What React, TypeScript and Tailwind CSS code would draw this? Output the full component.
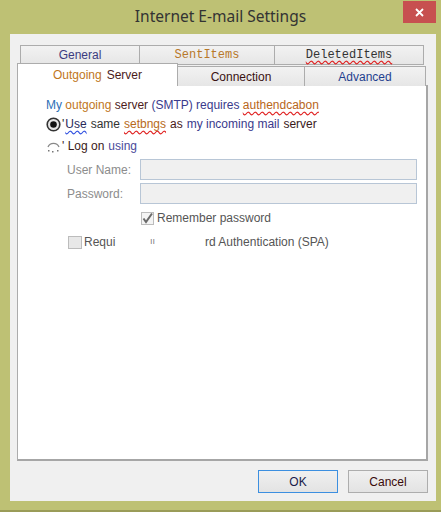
import React from "react";

const body = { fontFamily: '"Liberation Sans", Arial, sans-serif' };
const mono = { fontFamily: '"Liberation Mono", "Courier New", monospace' };

function RadioOn() {
  return (
    <svg width="15" height="15" viewBox="0 0 15 15" className="shrink-0">
      <circle cx="7.5" cy="7.5" r="6.3" fill="#e6e6e6" stroke="#333" strokeWidth="1.6" />
      <circle cx="7.5" cy="7.5" r="3.3" fill="#111" />
    </svg>
  );
}

function RadioBroken() {
  return (
    <svg width="15" height="15" viewBox="0 0 15 15" className="shrink-0">
      <path d="M2 8 A6 6 0 0 1 13 8" fill="none" stroke="#888" strokeWidth="1.3" />
      <rect x="2" y="11" width="1.5" height="1.5" fill="#777" />
      <rect x="6" y="12" width="1.5" height="1.5" fill="#777" />
      <rect x="11" y="11" width="1.5" height="1.5" fill="#777" />
    </svg>
  );
}

function Tab({ w, children, className = "" }: { w: string; children: React.ReactNode; className?: string }) {
  return (
    <div
      className={`${w} flex h-[20px] items-center justify-center border border-[#acacac] bg-gradient-to-b from-[#f2f2f2] to-[#e6e6e6] text-[12px] ${className}`}
    >
      {children}
    </div>
  );
}

export default function App() {
  return (
    <div className="flex h-[512px] w-[441px] flex-col bg-[#bec174]" style={body}>
      {/* title bar */}
      <div className="relative flex h-[34px] shrink-0 items-center justify-center">
        <span className="text-[15.5px] text-[#333]" style={{ fontFamily: '"Noto Sans", "Open Sans", sans-serif' }}>
          Internet E-mail Settings
        </span>
        <div className="absolute right-[5px] top-[1px] flex h-[22px] w-[33px] items-center justify-center bg-[#c75050]">
          <svg width="9" height="9" viewBox="0 0 9 9">
            <path d="M1 1 L8 8 M8 1 L1 8" stroke="#fff" strokeWidth="1.8" />
          </svg>
        </div>
      </div>

      {/* client area */}
      <div className="ml-[10px] mr-[5px] flex h-[467px] flex-col bg-[#f0f0f0] pl-[7px] pr-[8px] pt-[11px]">
        {/* back tab row */}
        <div className="ml-[3px] flex">
          <Tab w="w-[120px]" className="text-[#3b3b80]">General</Tab>
          <Tab w="w-[136px]" className="-ml-px text-[#b8782a]">
            <span style={mono} className="text-[12px]">SentItems</span>
          </Tab>
          <Tab w="w-[150px]" className="-ml-px text-[#333]">
            <span style={mono} className="text-[12px] underline decoration-[#e02020] decoration-wavy underline-offset-2">
              DeletedItems
            </span>
          </Tab>
        </div>
        {/* front tab row */}
        <div className="relative z-10 -mt-[2px] flex items-end">
          <div className="flex h-[23px] w-[161px] items-start justify-center border border-b-0 border-[#acacac] bg-white pt-[2px] text-[12px]">
            <span className="text-[#c0761c]">Outgoing</span>
            <span className="ml-[5px] text-[#4a1a1a]">Server</span>
          </div>
          <Tab w="w-[128px]" className="-ml-px h-[20px] border-b-0 text-[#3a1212]">Connection</Tab>
          <Tab w="w-[122px]" className="-ml-px h-[20px] border-b-0 text-[#1f3f8f]">Advanced</Tab>
        </div>

        {/* panel */}
        <div className="-mt-px h-[376px] border border-b-2 border-r-2 border-[#acacac] border-b-[#a6a6a6] border-r-[#a6a6a6] bg-white pl-[28px] pt-[11px] text-[12px]">
          <div className="leading-[16px]">
            <span className="text-[#2c6fb6]">My </span>
            <span className="text-[#c0761c]">outgoing </span>
            <span className="text-[#4c1c1c]">server </span>
            <span className="text-[#3a3a8c]">(SMTP) requires </span>
            <span className="text-[#b8661a] underline decoration-[#e02020] decoration-wavy underline-offset-2">authendcabon</span>
          </div>

          <div className="mt-[3px] flex items-center leading-[16px]">
            <RadioOn />
            <span className="ml-[1px] text-[#222]">'</span>
            <span className="ml-[1px] text-[#2a2a5a] underline decoration-[#3050e0] decoration-wavy underline-offset-2">Use</span>
            <span className="ml-[4px] text-[#333]">same</span>
            <span className="ml-[4px] text-[#b86a1a] underline decoration-[#e02020] decoration-wavy underline-offset-2">setbngs</span>
            <span className="ml-[4px] text-[#4a1a1a]">as</span>
            <span className="ml-[4px] text-[#3a3a8c]">my incoming mail</span>
            <span className="ml-[4px] text-[#3a1a1a]">server</span>
          </div>

          <div className="mt-[6px] flex items-center leading-[16px]">
            <RadioBroken />
            <span className="ml-[1px] text-[#3a1a1a]">' Log on</span>
            <span className="ml-[4px] text-[#4a4a9a]">using</span>
          </div>

          <div className="ml-[21px] mt-[5px] flex flex-col gap-[3px] pr-[9px] text-[#8c8c8c]">
            <div className="flex items-center">
              <span className="w-[73px]">User Name:</span>
              <div className="h-[21px] flex-1 border border-[#b8c6d6] bg-[#f0f0f0]" />
            </div>
            <div className="flex items-center">
              <span className="w-[73px]">Password:</span>
              <div className="h-[21px] flex-1 border border-[#b8c6d6] bg-[#f0f0f0]" />
            </div>
          </div>

          <div className="ml-[95px] mt-[5px] flex items-center text-[#555]">
            <svg width="13" height="13" viewBox="0 0 13 13" className="shrink-0">
              <rect x="0.5" y="0.5" width="12" height="12" fill="#f4f4f4" stroke="#bcbcbc" />
              <path d="M2.5 6.5 L5 10 L11 1.5" fill="none" stroke="#6a6a6a" strokeWidth="2" />
            </svg>
            <span className="ml-[3px]">Remember password</span>
          </div>

          <div className="ml-[22px] mt-[6px] flex items-center text-[#555]">
            <div className="h-[13px] w-[14px] shrink-0 border border-[#bcbcbc] bg-[#e8e8e8]" />
            <span className="ml-[2px] w-[66px]">Requi</span>
            <span className="w-[55px] text-[9px] text-[#777]">ıı</span>
            <span>rd Authentication (SPA)</span>
          </div>
        </div>

        {/* buttons */}
        <div className="mt-[9px] flex justify-end gap-[10px]">
          <div className="flex h-[23px] w-[80px] items-center justify-center border border-[#3c8fe0] bg-gradient-to-b from-[#f0f0f0] to-[#e3e3e3] text-[12px] text-[#1a1a4a]">
            OK
          </div>
          <div className="flex h-[23px] w-[80px] items-center justify-center border border-[#adadad] bg-gradient-to-b from-[#f0f0f0] to-[#e3e3e3] text-[12px] text-[#3a0a0a]">
            Cancel
          </div>
        </div>
      </div>
      <div className="mt-auto h-[2px] bg-[#9a9c58]" />
    </div>
  );
}
